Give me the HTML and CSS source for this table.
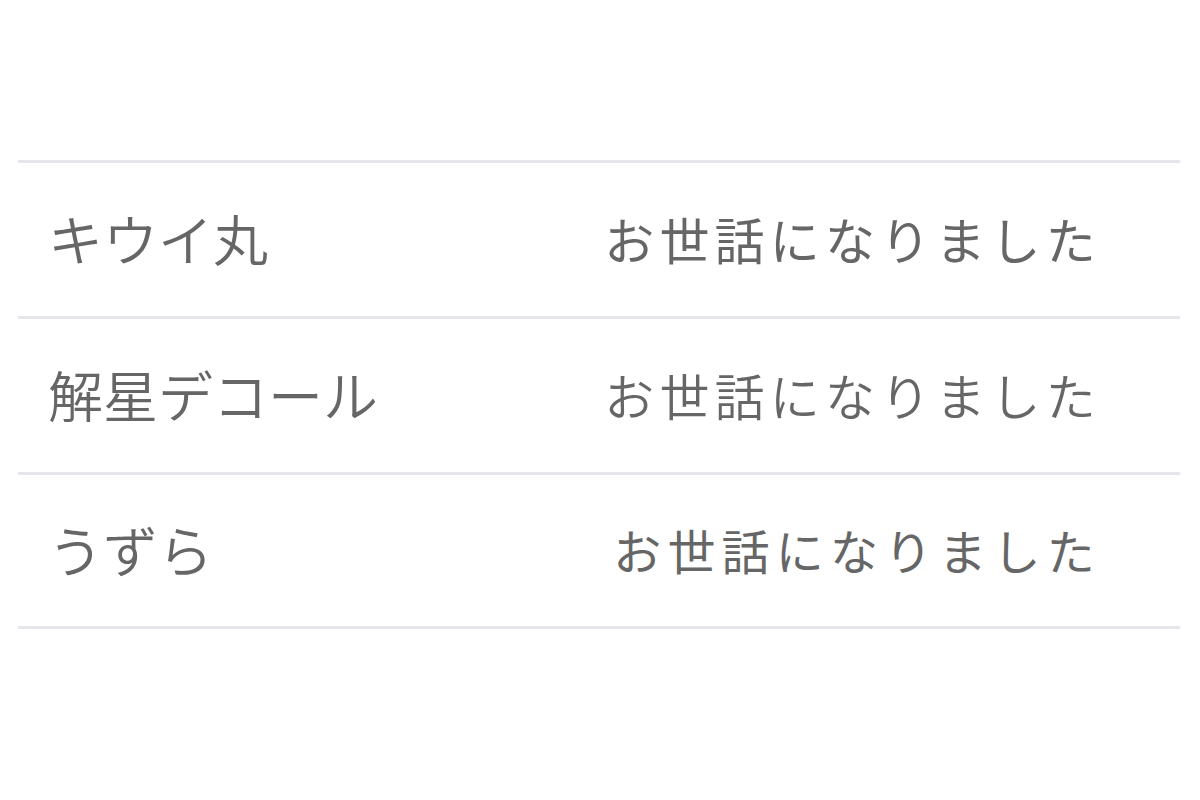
FILE: index.html
```html
<!DOCTYPE html>
<html lang="ja">
<head>
<meta charset="utf-8">
<title>フォント比較</title>
<link rel="stylesheet" href="styles.css">
</head>
<body>
<div class="list">
  <div class="row">
    <span class="name">キウイ丸</span>
    <span class="sample sample-kiwi">お世話になりました</span>
  </div>
  <div class="row">
    <span class="name">解星デコール</span>
    <span class="sample sample-decor">お世話になりました</span>
  </div>
  <div class="row row-last">
    <span class="name">うずら</span>
    <span class="sample sample-uzura">お世話になりました</span>
  </div>
</div>
</body>
</html>
```
FILE: styles.css
```css
html, body {
  margin: 0;
  padding: 0;
  background: #ffffff;
}
body {
  width: 1200px;
  height: 800px;
  overflow: hidden;
  font-family: "Noto Sans CJK JP", "Noto Sans", sans-serif;
  color: #666666;
}
.list {
  margin: 160px 20px 0 18px;
  border-bottom: 3px solid #e6e6ea;
}
.row {
  box-sizing: border-box;
  display: flex;
  align-items: center;
  justify-content: space-between;
  height: 156px;
  border-top: 3px solid #e6e6ea;
  padding: 0 79px 4px 30px;
}
.row-last {
  height: 154px;
}
.name {
  font-size: 55px;
  font-weight: 350;
  line-height: 1;
}
.sample {
  font-size: 50px;
  line-height: 1;
  letter-spacing: 5.2px;
}
.sample-kiwi {
  font-weight: 400;
}
.sample-decor {
  font-weight: 350;
}
.sample-uzura {
  font-weight: 400;
  font-size: 48px;
  letter-spacing: 6.2px;
}
```
